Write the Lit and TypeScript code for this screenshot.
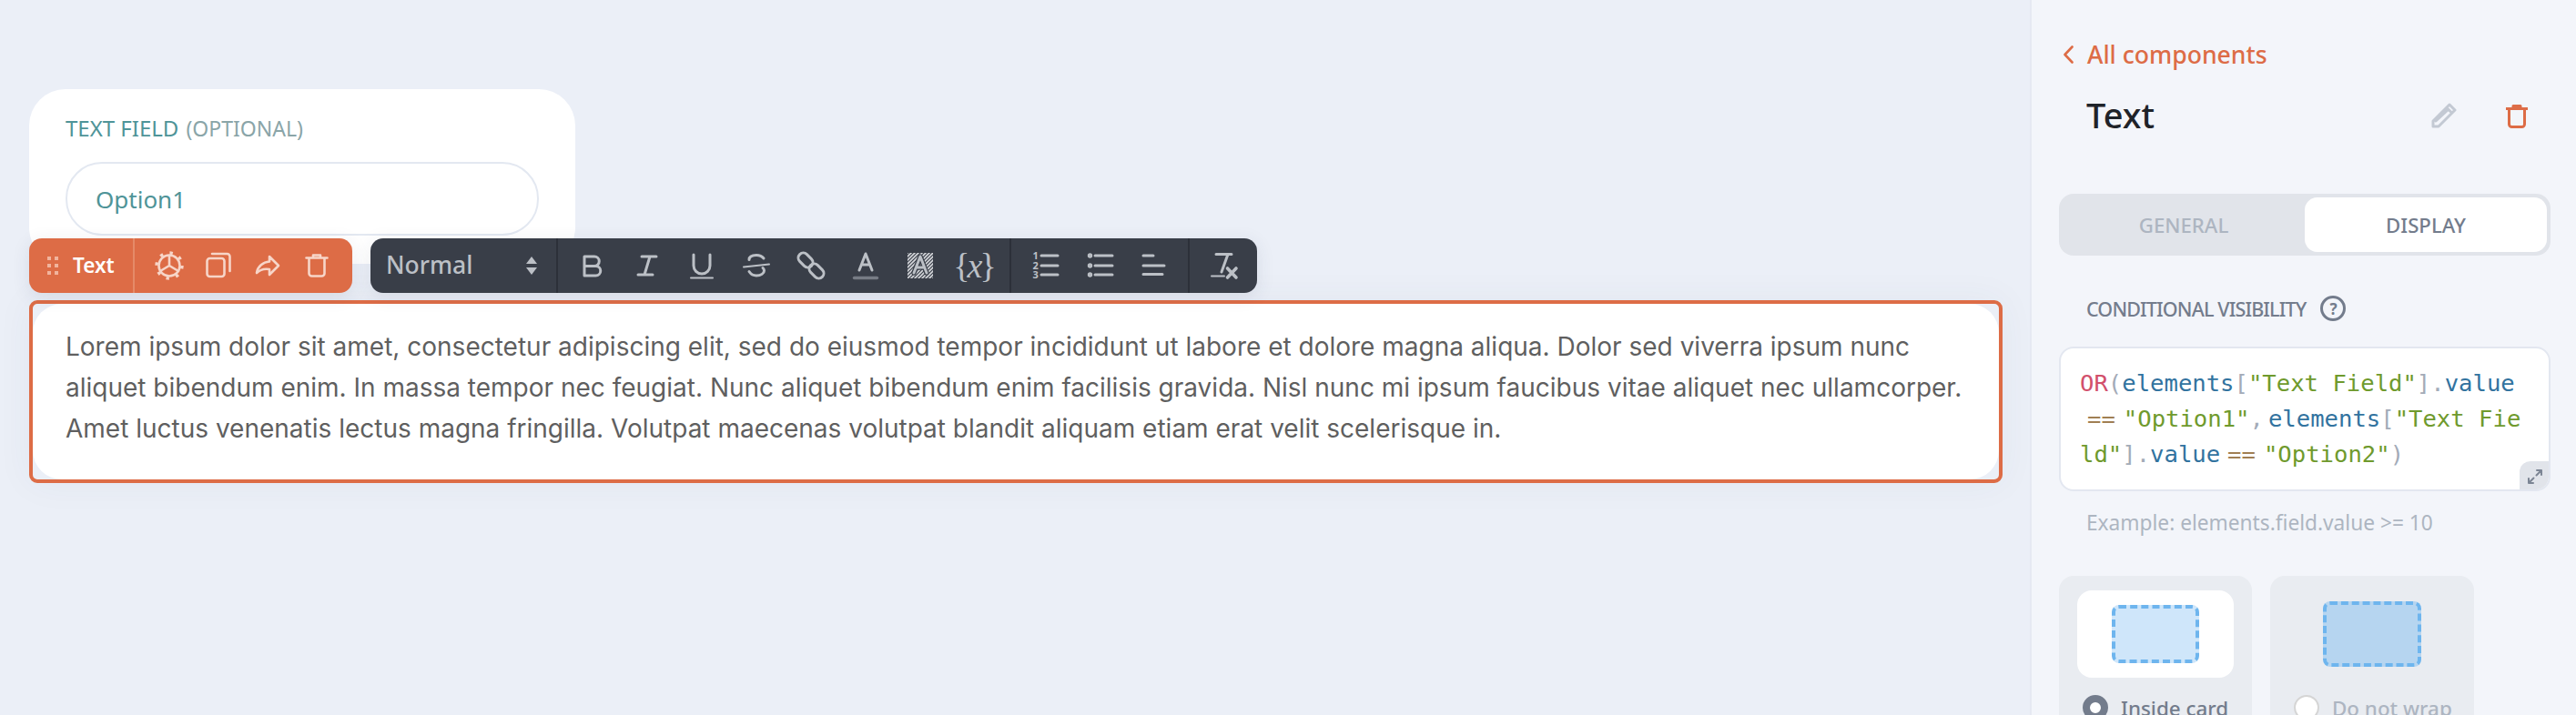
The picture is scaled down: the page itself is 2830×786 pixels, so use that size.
import { LitElement, html, css, svg } from "lit";
import { customElement } from "lit/decorators.js";

const LOREM =
  "Lorem ipsum dolor sit amet, consectetur adipiscing elit, sed do eiusmod tempor incididunt ut labore et dolore magna aliqua. Dolor sed viverra ipsum nunc aliquet bibendum enim. In massa tempor nec feugiat. Nunc aliquet bibendum enim facilisis gravida. Nisl nunc mi ipsum faucibus vitae aliquet nec ullamcorper. Amet luctus venenatis lectus magna fringilla. Volutpat maecenas volutpat blandit aliquam etiam erat velit scelerisque in.";

const icon54 = (body: unknown) => html`<svg class="ic54" viewBox="0 0 54 60" width="54" height="60">${body}</svg>`;
const icon60 = (body: unknown) => html`<svg class="ic60" viewBox="0 0 60 60" width="60" height="60">${body}</svg>`;

const trashPath = svg`<path d="M15.5 21.5H38.5M23 21V18.5H31V21M18.5 21.5V38.5A3 3 0 0 0 21.5 41.5H32.5A3 3 0 0 0 35.5 38.5V21.5"/>`;

@customElement("app-root")
export class AppRoot extends LitElement {
  static styles = css`
    :host { display: block; font-family: "Noto Sans", sans-serif; }
    * { box-sizing: border-box; }
    .page { display: flex; width: 2830px; height: 786px; overflow: hidden; background: #ebeff7; }
    .main { width: 2230px; flex: none; padding: 98px 0 0 32px; }
    .card { width: 600px; height: 192px; background: #fff; border-radius: 40px; padding: 30px 40px 0; }
    .label { height: 26px; line-height: 26px; font-size: 24px; color: #4f9498; white-space: nowrap; }
    .label span { color: #8aa5a8; margin-left: 8px; font-size: 23px; }
    .input { margin-top: 24px; height: 81px; border: 2px solid #e3e8f1; border-radius: 40px; padding-left: 31px; display: flex; align-items: center; font-size: 26px; color: #4f9498; background: #fff; }

    .editor { position: relative; margin-top: 40px; width: 2168px; height: 201px; border: 4px solid #dd6c46; border-radius: 9px; background: #ebeff7; box-shadow: 0 0 40px rgba(60, 70, 100, 0.05); }
    .inner { height: 100%; background: #fff; border-radius: 32px; padding: 25px 36px 0; font-family: Inter, sans-serif; font-size: 28px; line-height: 44.8px; color: #5f5f5f; }

    .toolbars { position: absolute; left: -4px; top: -72px; display: flex; gap: 20px; height: 60px; }
    .tb { display: flex; flex: none; height: 60px; border-radius: 14px; box-shadow: 0 4px 20px rgba(50, 60, 90, 0.1); }
    .orange { width: 355px; background: #dd6c46; }
    .o-name { width: 116px; flex: none; display: flex; align-items: center; border-right: 2px solid #e58a68; padding: 0 0 2px 20px; color: #fff; font-size: 22.5px; font-weight: 600; }
    .grip { display: grid; grid-template-columns: 4px 4px; gap: 4px 4px; margin: 2px 16px 0 0; }
    .grip i { width: 4px; height: 4px; background: #f1b49d; }
    .o-icons { display: flex; padding-left: 11px; }
    .ic54 { display: block; flex: none; fill: none; stroke: #f7d5c8; stroke-width: 2.6; stroke-linecap: round; stroke-linejoin: round; }
    .dark { width: 974px; background: #393e48; }
    .sec { display: flex; flex: none; align-items: center; border-right: 2px solid #2c3039; padding: 0 8px; }
    .sec.lists { padding: 0 6px 0 8px; }
    .sec:last-child { border-right: none; }
    .select { width: 206px; justify-content: space-between; padding: 0 21px 0 17px; color: #bcc0c6; font-size: 26.5px; font-weight: 500; }
    .select span { padding-bottom: 2px; }
    .ic60 { display: block; flex: none; fill: none; stroke: #bcc0c6; stroke-width: 3; stroke-linecap: round; stroke-linejoin: round; }
    .ic60 .num { fill: #bcc0c6; stroke: none; font: 700 11px "Noto Sans", sans-serif; }
    .var { width: 60px; flex: none; display: flex; justify-content: center; align-items: center; height: 60px; font-family: "Liberation Serif", serif; font-size: 38px; color: #bcc0c6; white-space: pre; }
    .var i { margin: 0 -3px; }

    .panel { flex: 1; border-left: 2px solid #e6e9f2; background: #f3f5fa; padding: 40px 28px 0 30px; }
    .back { height: 40px; display: flex; align-items: center; color: #dd6c46; font-size: 26.6px; font-weight: 500; padding-left: 5px; }
    .back svg { margin-right: 15px; fill: none; stroke: #dd6c46; stroke-width: 2.6; stroke-linecap: round; stroke-linejoin: round; }
    .title { margin-top: 26px; height: 40px; display: flex; align-items: center; padding-left: 30px; font-size: 38px; font-weight: 500; color: #1f2329; }
    .title .sp { flex: 1; }
    .pencil { fill: none; stroke: #c3c9d3; stroke-width: 3; stroke-linejoin: round; stroke-linecap: round; margin: 2px 54px 0 0; display: block; }
    .trash { fill: none; stroke: #dd6c46; stroke-width: 3; stroke-linecap: round; stroke-linejoin: round; margin: 2px 25px 0 0; display: block; }
    .tabs { margin-top: 67px; height: 68px; border-radius: 16px; background: #e1e4ea; padding: 4px; display: grid; grid-template-columns: 1fr 1fr; font-size: 22.2px; font-weight: 500; color: #adb5c1; }
    .tabs div { display: flex; align-items: center; justify-content: center; border-radius: 14px; }
    .tabs .on { background: #fff; color: #737c8c; }
    .cond { margin-top: 44px; height: 28px; padding-left: 30px; display: flex; align-items: center; gap: 16px; font-size: 21.5px; letter-spacing: -0.85px; font-weight: 500; color: #737c8c; white-space: nowrap; }
    .help { width: 28px; height: 28px; border: 3px solid #737c8c; border-radius: 50%; display: flex; align-items: center; justify-content: center; font-size: 17px; font-weight: 700; letter-spacing: 0; }
    .code { position: relative; margin-top: 28px; height: 159px; border: 2px solid #e3e7f0; border-radius: 16px; background: #fff; padding: 19px 0 0 21px; font-family: "DejaVu Sans Mono", monospace; font-size: 25.6px; line-height: 39px; white-space: pre; overflow: hidden; }
    .k { color: #d2506c; } .p { color: #a3abb8; } .v { color: #32739f; } .s { color: #6f9a2d; }
    .o { color: #a07f53; margin: 0 9px 0 8px; }
    .c { margin-right: 5px; }
    .expand { position: absolute; right: -2px; bottom: -2px; width: 34px; height: 33px; background: #e1e4ea; border-radius: 12px 0 16px 0; display: flex; align-items: center; justify-content: center; }
    .expand svg { fill: none; stroke: #7c8594; stroke-width: 2; stroke-linecap: round; stroke-linejoin: round; }
    .example { margin-top: 19px; height: 32px; line-height: 32px; padding-left: 30px; font-size: 22.7px; color: #adb5c1; white-space: nowrap; }
    .wraps { margin-top: 42px; display: flex; gap: 20px; }
    .wrap { height: 200px; border-radius: 16px; background: #e9ecf1; padding: 16px 20px 0; }
    .wrap.a { width: 212px; }
    .wrap.b { width: 224px; }
    .prev { height: 96px; border-radius: 16px; display: flex; align-items: center; justify-content: center; }
    .a .prev { background: #fff; }
    .blue { border: 4px dashed #6eb5ee; border-radius: 8px; }
    .a .blue { width: 96px; height: 64px; background: #cfe6fa; }
    .b .blue { width: 108px; height: 72px; background: #b6d5f0; }
    .opt { margin: 19px 0 0 6px; height: 28px; display: flex; align-items: center; gap: 14px; font-size: 22.4px; font-weight: 500; white-space: nowrap; }
    .a .opt { color: #737c8c; }
    .b .opt { color: #adb5c1; }
    .radio { width: 28px; height: 28px; flex: none; border-radius: 50%; background: #fff; }
    .a .radio { border: 8px solid #737c8c; }
    .b .radio { border: 2px solid #d5d5d5; }
  `;

  private orangeIcons() {
    return html`
      ${icon54(svg`<circle cx="27" cy="30" r="11.5"/><circle cx="27" cy="30" r="14" stroke-width="3.4" stroke-dasharray="3.4 7.6" stroke-linecap="butt"/><path d="M27 30V19M27 30L17 36M27 30L37 36"/>`)}
      ${icon54(svg`<rect x="14.5" y="22" width="19" height="20" rx="3"/><path d="M20 17H36.5A3 3 0 0 1 39.5 20V36"/>`)}
      ${icon54(svg`<path d="M29 20L39 30L29 40V34C23 33 18 35 15 38C16 31 22 26 29 25.5Z"/>`)}
      ${icon54(trashPath)}
    `;
  }

  render() {
    return html`
      <div class="page">
        <div class="main">
          <div class="card">
            <div class="label">TEXT FIELD<span>(OPTIONAL)</span></div>
            <div class="input">Option1</div>
          </div>
          <div class="editor">
            <div class="toolbars">
              <div class="tb orange">
                <div class="o-name"><div class="grip">${[0, 1, 2, 3, 4, 5].map(() => html`<i></i>`)}</div>Text</div>
                <div class="o-icons">${this.orangeIcons()}</div>
              </div>
              <div class="tb dark">
                <div class="sec select">
                  <span>Normal</span>
                  <svg width="12" height="20" viewBox="0 0 12 20"><path d="M6 0L12 8H0ZM6 20L0 12H12Z" fill="#bcc0c6"/></svg>
                </div>
                <div class="sec">
                  ${icon60(svg`<path d="M21 20H32A5.2 5.2 0 0 1 32 30.5H21ZM21 30.5H33.5A5.2 5.2 0 0 1 33.5 41H21Z"/>`)}
                  ${icon60(svg`<path d="M24 20H40M20 40H36M33 20L27 40"/>`)}
                  ${icon60(svg`<path d="M21 18V30A9 9 0 0 0 39 30V18"/><path d="M18 43.5H42" stroke-width="2"/>`)}
                  ${icon60(svg`<path d="M38 22C36 19.5 33 18.5 30 18.5C25 18.5 22 20.5 22 23.5M22 36.5C24 39.5 27 41 30 41C35 41 38.5 38.5 38.5 35.5C38.5 34.5 38 33.5 37 32.5"/><path d="M16 31.5L44 28.5" stroke-width="2"/>`)}
                  ${icon60(svg`<rect x="15" y="18.5" width="18" height="11" rx="5.5" transform="rotate(45 24 24)"/><rect x="27" y="30.5" width="18" height="11" rx="5.5" transform="rotate(45 36 36)"/>`)}
                  ${icon60(svg`<path d="M23 35L30 17L37 35M25.5 29H34.5"/><path d="M17.5 43.5H42.5" stroke="#777c85" stroke-width="3.4"/>`)}
                  ${icon60(svg`<defs><pattern id="hl" width="4" height="4" patternUnits="userSpaceOnUse"><path d="M-1 1L1 -1M0 4L4 0M3 5L5 3" stroke="#d4d6da" stroke-width="1.7" stroke-linecap="butt"/></pattern></defs><rect x="16" y="16" width="28" height="28" fill="url(#hl)" stroke="none"/><path d="M23 38L30 20L37 38M25.5 32H34.5" stroke="#393e48" stroke-width="5.5"/><path d="M23 38L30 20L37 38M25.5 32H34.5"/>`)}
                  <div class="var">{<i>x</i>}</div>
                </div>
                <div class="sec lists">
                  ${icon60(svg`<text class="num" x="15.5" y="23">1</text><text class="num" x="15.5" y="34">2</text><text class="num" x="15.5" y="44">3</text><path d="M25 19H43M25 30H43M25 40H43"/>`)}
                  ${icon60(svg`<path d="M24 19H43M24 30H43M24 40H43"/><circle cx="18.5" cy="19" r="1.2"/><circle cx="18.5" cy="30" r="1.2"/><circle cx="18.5" cy="40" r="1.2"/>`)}
                  ${icon60(svg`<path d="M17 19H28M17 30H40M17 39.5H38"/>`)}
                </div>
                <div class="sec">
                  ${icon60(svg`<path d="M21 17.5H38M34 17.5L27 37"/><path d="M16 41.5H30" stroke-width="2"/><path d="M33.5 33L43 43M43 33L33.5 43" stroke-width="3.6"/>`)}
                </div>
              </div>
            </div>
            <div class="inner">${LOREM}</div>
          </div>
        </div>
        <div class="panel">
          <div class="back">
            <svg width="11" height="20" viewBox="0 0 11 20"><path d="M9.5 1.5L1.5 10L9.5 18.5"/></svg>All components
          </div>
          <div class="title">
            Text<span class="sp"></span>
            <svg class="pencil" width="28" height="28" viewBox="0 0 28 28"><path d="M2 26V20L20 2L26 8L8 26ZM17 5.5L22.5 11M5 20L18 8"/></svg>
            <svg class="trash" width="24" height="27" viewBox="15 16 24 27">${trashPath}</svg>
          </div>
          <div class="tabs"><div>GENERAL</div><div class="on">DISPLAY</div></div>
          <div class="cond">CONDITIONAL VISIBILITY <span class="help">?</span></div>
          <div class="code"><div><span class="k">OR</span><span class="p">(</span><span class="v">elements</span><span class="p">[</span><span class="s">"Text Field"</span><span class="p">].</span><span class="v">value</span></div><div><span class="o">==</span><span class="s">"Option1"</span><span class="p c">,</span><span class="v">elements</span><span class="p">[</span><span class="s">"Text Fie</span></div><div><span class="s">ld"</span><span class="p">].</span><span class="v">value</span><span class="o">==</span><span class="s">"Option2"</span><span class="p">)</span></div><div class="expand"><svg width="18" height="18" viewBox="0 0 18 18"><path d="M10.5 7.5L16 2M11 2H16V7M7.5 10.5L2 16M2 11V16H7"/></svg></div></div>
          <div class="example">Example: elements.field.value &gt;= 10</div>
          <div class="wraps">
            <div class="wrap a"><div class="prev"><div class="blue"></div></div><div class="opt"><span class="radio"></span>Inside card</div></div>
            <div class="wrap b"><div class="prev"><div class="blue"></div></div><div class="opt"><span class="radio"></span>Do not wrap</div></div>
          </div>
        </div>
      </div>
    `;
  }
}
